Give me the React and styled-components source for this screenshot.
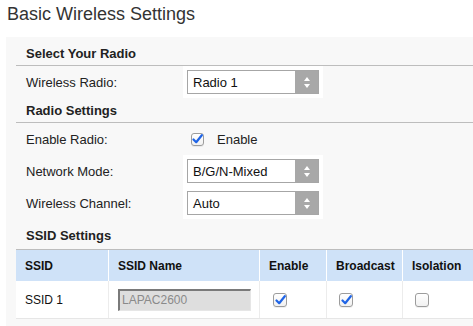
import React from 'react';
import styled, { createGlobalStyle } from 'styled-components';

const GlobalStyle = createGlobalStyle`
    html, body {
        margin: 0;
        padding: 0;
        background: #ffffff;
        font-family: "Liberation Sans", Arial, sans-serif;
        color: #222;
    }
    * { box-sizing: border-box; }
`;

const Page = styled.div`
    width: 473px;
    height: 326px;
    overflow: hidden;
`;

const Title = styled.h1`
    margin: 0;
    height: 37px;
    padding: 4px 7px 0;
    font-size: 18px;
    line-height: 20px;
    font-weight: normal;
    color: #333;
`;

const Panel = styled.div`
    margin-left: 6px;
    background: #f8f8f8;
    padding-top: 4px;
    height: 289px;
`;

const Heading = styled.div`
    margin-left: 10px;
    padding: ${(p) => p.$top || 5}px 10px ${(p) => p.$bottom || 3}px;
    border-bottom: 1px solid #bdbdbd;
    font-size: 13px;
    line-height: 16px;
    font-weight: bold;
    color: #222;
`;

const FormRow = styled.div`
    margin-left: 10px;
    display: grid;
    grid-template-columns: 167px 140px;
    height: 32px;
`;

const Label = styled.div`
    display: flex;
    align-items: center;
    padding-left: 10px;
    font-size: 13px;
`;

const Field = styled.div`
    display: flex;
    align-items: center;
    padding: 4px;
    background: ${(p) => (p.$white ? '#ffffff' : 'transparent')};
    font-size: 13px;
`;

const SelectBox = styled.div`
    display: flex;
    width: 132px;
    height: 24px;
    border: 1px solid #a6a6a6;
    background: #fff;
    font-size: 13px;
`;

const SelectText = styled.span`
    flex: 1;
    display: flex;
    align-items: center;
    padding-left: 5px;
    color: #111;
`;

const SelectArrows = styled.span`
    width: 23px;
    background: #a8a8a8;
    display: flex;
    align-items: center;
    justify-content: center;
`;

const Box = styled.span`
    display: inline-flex;
    align-items: center;
    justify-content: center;
    width: ${(p) => p.$size || 14}px;
    height: ${(p) => p.$size || 14}px;
    margin-left: ${(p) => p.$ml || 4}px;
    border: 1px solid #9c9c9c;
    border-radius: 3px;
    background: linear-gradient(#ffffff, #f1f1f1);
    box-shadow: 0 1px 0 rgba(0, 0, 0, 0.06);
`;

const CheckLabel = styled.span`
    margin-left: 13px;
    font-size: 13px;
`;

const Table = styled.div`
    margin-left: 10px;
`;

const TRow = styled.div`
    display: grid;
    grid-template-columns: 92px 151px 67px 76px 1fr;
    height: ${(p) => (p.$head ? 31 : 38)}px;
    background: ${(p) => (p.$head ? '#cfe2f8' : '#ffffff')};
    border-bottom: ${(p) => (p.$head ? 'none' : '1px solid #e6e6e6')};
`;

const Cell = styled.div`
    display: flex;
    align-items: center;
    padding-left: 9px;
    font-size: 12px;
    font-weight: ${(p) => (p.$head ? 'bold' : 'normal')};
    color: #111;
    border-left: ${(p) => (p.$first ? 'none' : p.$head ? '1px solid #ffffff' : '1px solid #ececec')};
`;

const DisabledInput = styled.div`
    width: 133px;
    height: 22px;
    display: flex;
    align-items: center;
    padding-left: 2px;
    background: #dedede;
    border-top: 2px solid #7a7a7a;
    border-left: 2px solid #7a7a7a;
    border-right: 1px solid #e6e6e6;
    border-bottom: 1px solid #e6e6e6;
    color: #8a8a8a;
    font-size: 12px;
`;

function Arrows() {
    return (
        <svg width="8" height="13" viewBox="0 0 8 13">
            <path d="M4 1 L7 5 L1 5 Z" fill="#fff" />
            <path d="M1 8 L7 8 L4 12 Z" fill="#fff" />
        </svg>
    );
}

function Select({ value }) {
    return (
        <SelectBox>
            <SelectText>{value}</SelectText>
            <SelectArrows><Arrows /></SelectArrows>
        </SelectBox>
    );
}

function Checkbox({ checked, size, ml }) {
    return (
        <Box $size={size} $ml={ml}>
            {checked && (
                <svg width="11" height="10" viewBox="0 0 11 10">
                    <path d="M1.5 5.5 L4.2 8.2 L9.8 1.2" stroke="#1f64e6" strokeWidth="2.2"
                        fill="none" strokeLinecap="round" strokeLinejoin="round" />
                </svg>
            )}
        </Box>
    );
}

function App() {
    return (
        <Page>
            <GlobalStyle />
            <Title>Basic Wireless Settings</Title>
            <Panel>
                <Heading>Select Your Radio</Heading>
                <FormRow>
                    <Label>Wireless Radio:</Label>
                    <Field $white><Select value="Radio 1" /></Field>
                </FormRow>

                <Heading>Radio Settings</Heading>
                <FormRow>
                    <Label>Enable Radio:</Label>
                    <Field>
                        <Checkbox checked size={13} />
                        <CheckLabel>Enable</CheckLabel>
                    </Field>
                </FormRow>
                <FormRow>
                    <Label>Network Mode:</Label>
                    <Field $white><Select value="B/G/N-Mixed" /></Field>
                </FormRow>
                <FormRow>
                    <Label>Wireless Channel:</Label>
                    <Field $white><Select value="Auto" /></Field>
                </FormRow>

                <Heading $top={9} $bottom={5}>SSID Settings</Heading>
                <Table>
                    <TRow $head>
                        <Cell $head $first>SSID</Cell>
                        <Cell $head>SSID Name</Cell>
                        <Cell $head>Enable</Cell>
                        <Cell $head>Broadcast</Cell>
                        <Cell $head>Isolation</Cell>
                    </TRow>
                    <TRow>
                        <Cell $first>SSID 1</Cell>
                        <Cell><DisabledInput>LAPAC2600</DisabledInput></Cell>
                        <Cell><Checkbox checked /></Cell>
                        <Cell><Checkbox checked ml={3} /></Cell>
                        <Cell><Checkbox ml={3} /></Cell>
                    </TRow>
                </Table>
            </Panel>
        </Page>
    );
}

export default App;
